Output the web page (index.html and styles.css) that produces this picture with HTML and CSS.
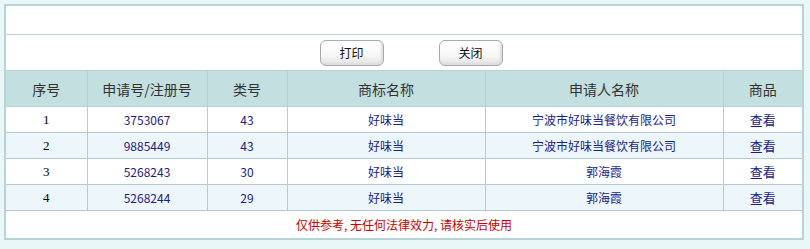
FILE: index.html
```html
<!DOCTYPE html>
<html lang="zh-CN">
<head>
<meta charset="utf-8">
<title>商标查询结果</title>
<link rel="stylesheet" href="styles.css">
</head>
<body>
<div class="page">
  <table class="grid">
    <colgroup>
      <col class="c1"><col class="c2"><col class="c3"><col class="c4"><col class="c5"><col class="c6">
    </colgroup>
    <tr class="blank"><td colspan="6"></td></tr>
    <tr class="tools">
      <td colspan="6">
        <div class="btns">
          <button class="btn" type="button">打印</button>
          <button class="btn" type="button">关闭</button>
        </div>
      </td>
    </tr>
    <tr class="head">
      <th>序号</th><th>申请号/注册号</th><th>类号</th><th>商标名称</th><th>申请人名称</th><th>商品</th>
    </tr>
    <tr class="row">
      <td class="idx">1</td><td>3753067</td><td>43</td><td>好味当</td><td>宁波市好味当餐饮有限公司</td><td class="view">查看</td>
    </tr>
    <tr class="row alt">
      <td class="idx">2</td><td>9885449</td><td>43</td><td>好味当</td><td>宁波市好味当餐饮有限公司</td><td class="view">查看</td>
    </tr>
    <tr class="row">
      <td class="idx">3</td><td>5268243</td><td>30</td><td>好味当</td><td>郭海霞</td><td class="view">查看</td>
    </tr>
    <tr class="row alt">
      <td class="idx">4</td><td>5268244</td><td>29</td><td>好味当</td><td>郭海霞</td><td class="view">查看</td>
    </tr>
    <tr class="foot">
      <td colspan="6">仅供参考, 无任何法律效力, 请核实后使用</td>
    </tr>
  </table>
</div>
</body>
</html>
```
FILE: styles.css
```css
html, body {
  margin: 0;
  padding: 0;
  background: #eaf7f9;
}
.page {
  padding: 4px 6px 0 4px;
}
.grid {
  width: 800px;
  border-collapse: collapse;
  table-layout: fixed;
  background: #ffffff;
  border: 2px solid #b7d3d8;
  font-family: "Noto Sans CJK SC", "Liberation Sans", sans-serif;
  font-size: 12px;
}
.c1 { width: 82px; }
.c2 { width: 120px; }
.c3 { width: 80px; }
.c4 { width: 198px; }
.c5 { width: 238px; }
.c6 { width: 80px; }

.grid td, .grid th {
  padding: 0;
  text-align: center;
  border: 1px solid #bcd5dc;
}
.blank td {
  height: 28px;
  border-left: none;
  border-right: none;
  border-top: none;
}
.tools td {
  height: 35px;
  border: none;
}
.btns {
  display: flex;
  justify-content: center;
  gap: 55px;
  padding-left: 14px;
}
.btn {
  width: 64px;
  height: 26px;
  padding: 0;
  border: 1px solid #a9a9a9;
  border-radius: 6px;
  background: linear-gradient(#ffffff 0%, #f7f7f7 60%, #e3e3e3 100%);
  box-shadow: inset -2px -2px 2px #dedede;
  font-family: "Noto Sans CJK SC", sans-serif;
  font-size: 12px;
  color: #111;
}
.head th {
  height: 35px;
  background: #c3dfdf;
  font-weight: normal;
  font-size: 14px;
  color: #333;
  border-color: #b5d2d5;
}
.row td {
  height: 25px;
  color: #1c1c8a;
  border-color: #b5ccd6;
}
.row.alt td {
  background: #edf6fb;
}
.row td.idx {
  font-family: "Liberation Serif", serif;
  color: #000;
  font-size: 13px;
}
.row td.view {
  font-size: 13px;
}
.foot td {
  height: 27px;
  color: #cc0000;
  border: none;
  border-top: 1px solid #b5ccd6;
}
```
